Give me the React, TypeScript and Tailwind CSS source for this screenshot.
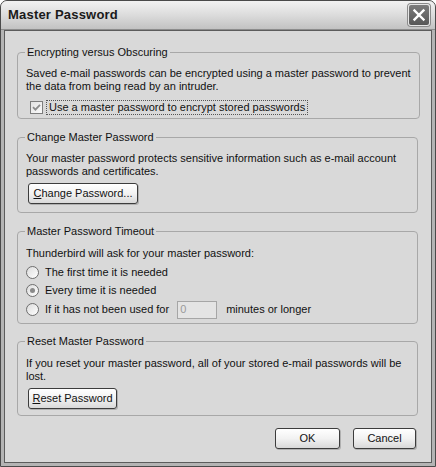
const font = "font-['Liberation_Sans','DejaVu_Sans',sans-serif]";

const GroupBox = ({ title, children, className = "" }: { title: string; children: React.ReactNode; className?: string }) => (
  <fieldset className={`border border-[#a8a8a8] rounded-[4px] px-[8px] ${className}`}>
    <legend className="-ml-[1px] px-[2px] text-[11px] leading-[13px] text-[#111]">{title}</legend>
    {children}
  </fieldset>
);

const XpButton = ({ children, className = "" }: { children: React.ReactNode; className?: string }) => (
  <button className={`h-[21px] rounded-[3px] border border-[#3c3c3c] bg-gradient-to-b from-[#ffffff] via-[#f2f2f2] to-[#d9d9d9] text-[11px] leading-[13px] text-[#111] shadow-[1px_1px_0_#b0b0b0] ${className}`}>
    {children}
  </button>
);

const Radio = ({ checked = false }: { checked?: boolean }) => (
  <span className="w-[13px] h-[13px] rounded-full border border-[#6e6e6e] bg-gradient-to-br from-[#dcdcdc] to-[#ffffff] flex items-center justify-center shrink-0">
    {checked && <span className="w-[5px] h-[5px] rounded-full bg-[#8a8a8a]" />}
  </span>
);

export default function App() {
  return (
    <div className={`w-[436px] h-[467px] flex flex-col bg-[#b4b4b4] border border-[#4a4a4a] rounded-t-[7px] overflow-hidden ${font}`}>
      {/* title bar */}
      <div className="h-[29px] shrink-0 flex items-center justify-between pl-[7px] pr-[5px] bg-gradient-to-b from-[#f2f2f2] via-[#dcdcdc] to-[#c2c2c2] border-b border-[#8c8c8c]">
        <span className="text-[13px] font-bold text-[#1a1a1a] tracking-[0.2px]">Master Password</span>
        <div className="w-[22px] h-[22px] rounded-[3px] border border-[#e6e6e6] bg-gradient-to-b from-[#7c7c7c] to-[#575757] flex items-center justify-center shadow-[0_0_0_1px_#8a8a8a]">
          <svg width="14" height="14" viewBox="0 0 14 14">
            <path d="M2.5 2.5 L11.5 11.5 M11.5 2.5 L2.5 11.5" stroke="#fff" strokeWidth="2.4" strokeLinecap="square" />
          </svg>
        </div>
      </div>

      {/* body */}
      <div className="flex-1 flex flex-col mx-[3px] mb-[3px] border border-[#5c5c5c] bg-[#d9d9d9] pl-[12px] pr-[13px] pt-[15px]">
        <GroupBox title="Encrypting versus Obscuring" className="pb-[3px]">
          <p className="mt-[8px] text-[11px] leading-[13px] text-[#111] whitespace-nowrap">
            Saved e-mail passwords can be encrypted using a master password to prevent<br />
            the data from being read by an intruder.
          </p>
          <div className="mt-[7px] h-[15px] flex items-center ml-[4px]">
            <span className="w-[13px] h-[13px] border border-[#7d7d7d] bg-gradient-to-br from-[#e2e2e2] to-[#fafafa] flex items-center justify-center">
              <svg width="9" height="9" viewBox="0 0 9 9">
                <path d="M1 4.2 L3.4 6.6 L8 1.8" fill="none" stroke="#8c8c8c" strokeWidth="1.8" />
              </svg>
            </span>
            <span className="ml-[3px] h-[15px] px-[2px] border border-dotted border-[#555] flex items-center text-[11px] leading-[13px] text-[#111]">
              Use a master password to encrypt stored passwords
            </span>
          </div>
        </GroupBox>

        <GroupBox title="Change Master Password" className="mt-[12px] pb-[8px]">
          <p className="mt-[8px] text-[11px] leading-[13px] text-[#111] whitespace-nowrap">
            Your master password protects sensitive information such as e-mail account<br />
            passwords and certificates.
          </p>
          <XpButton className="mt-[5px] ml-[2px] w-[110px]">
            <span className="underline">C</span>hange Password...
          </XpButton>
        </GroupBox>

        <GroupBox title="Master Password Timeout" className="mt-[12px] pb-[3px]">
          <p className="mt-[9px] text-[11px] leading-[13px] text-[#111]">Thunderbird will ask for your master password:</p>
          <div className="mt-[3px] flex flex-col text-[11px] leading-[13px] text-[#111]">
            <label className="h-[18px] flex items-center gap-[6px]">
              <Radio />
              The first time it is needed
            </label>
            <label className="h-[18px] flex items-center gap-[6px]">
              <Radio checked />
              Every time it is needed
            </label>
            <label className="h-[21px] flex items-center gap-[6px]">
              <Radio />
              If it has not been used for
              <span className="ml-[2px] w-[40px] h-[18px] border border-[#a6a6a6] bg-[#e4e4e4] flex items-center pl-[2px] text-[#9a9a9a]">0</span>
              <span className="ml-[3px]">minutes or longer</span>
            </label>
          </div>
        </GroupBox>

        <GroupBox title="Reset Master Password" className="mt-[11px] pb-[6px]">
          <p className="mt-[9px] text-[11px] leading-[13px] text-[#111] whitespace-nowrap">
            If you reset your master password, all of your stored e-mail passwords will be<br />
            lost.
          </p>
          <XpButton className="mt-[5px] ml-[2px] w-[89px]">
            <span className="underline">R</span>eset Password
          </XpButton>
        </GroupBox>

        <div className="mt-[12px] flex justify-end gap-[13px] pr-[2px]">
          <XpButton className="w-[65px]">OK</XpButton>
          <XpButton className="w-[63px]">Cancel</XpButton>
        </div>
      </div>
    </div>
  );
}
